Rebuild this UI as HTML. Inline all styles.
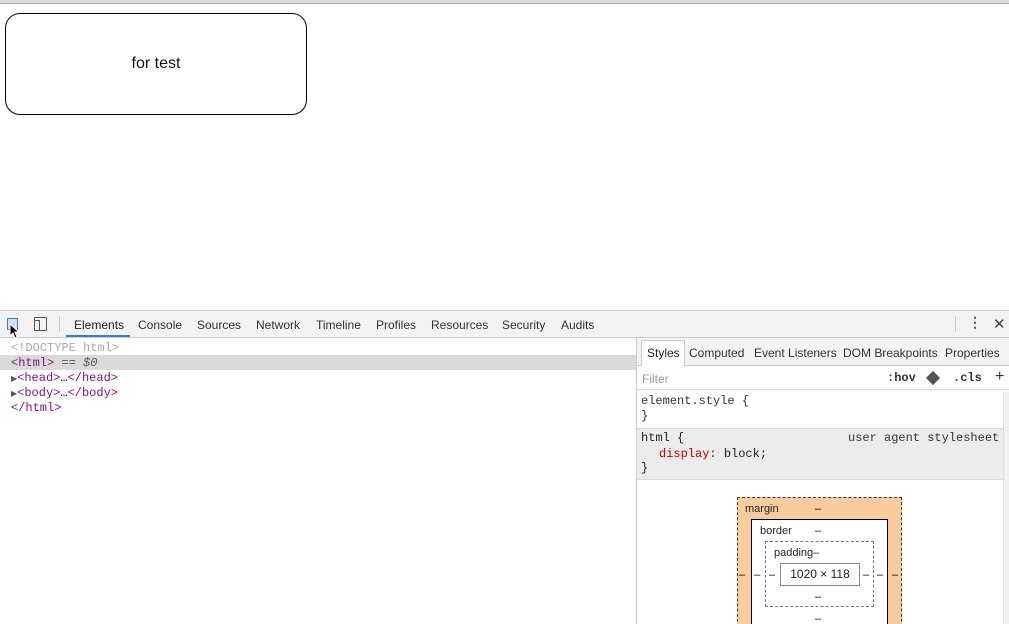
<!DOCTYPE html>
<html style="overflow:hidden"><head><style>
*{margin:0;padding:0;box-sizing:border-box}
html,body{width:1009px;height:624px;overflow:hidden}
body{background:#fff;font-family:"Liberation Sans",sans-serif;position:relative}
.a{position:absolute;white-space:nowrap}
.m{font-family:"Liberation Mono",monospace;font-size:12px;line-height:14px}
.t{font-size:12px;color:#333}
.tag{color:#881280}
</style></head><body>
<div class="a" style="left:0;top:0;width:1009px;height:4px;background:#dcdcdc;border-bottom:1px solid #aaa"></div>
<div class="a" style="left:5px;top:13px;width:302px;height:102px;border:1px solid #000;border-radius:15px;text-align:center;line-height:100px;font-size:16px;color:#111">for test</div>

<div class="a" style="left:0;top:310px;width:1009px;height:314px;background:#fff;border-top:1px solid #ccc"></div>
<div class="a" style="left:0;top:311px;width:1009px;height:27px;background:#f3f3f3;border-bottom:1px solid #ccc"></div>
<div class="a" style="left:7px;top:318px;width:11px;height:12px;border:1px solid #3879d9;background:#cfe0f7"></div>
<svg class="a" style="left:9px;top:323px" width="12" height="16" viewBox="0 0 12 16"><path d="M1 1 L1 13 L4 10 L6 15 L8 14 L6 9 L10 9 Z" fill="#000" stroke="#fff" stroke-width="1"/></svg>
<div class="a" style="left:34px;top:317px;width:13px;height:14px;border:1px solid #555;border-radius:1px"></div>
<div class="a" style="left:34px;top:320px;width:6px;height:11px;border:1px solid #555;background:#f3f3f3"></div>
<div class="a" style="left:59px;top:316px;width:1px;height:16px;background:#ccc"></div>
<div class="a t" style="left:74px;top:318px;color:#222">Elements</div>
<div class="a" style="left:66px;top:335px;width:64px;height:2px;background:#3879d9"></div>
<div class="a t" style="left:138px;top:318px">Console</div>
<div class="a t" style="left:197px;top:318px">Sources</div>
<div class="a t" style="left:256px;top:318px">Network</div>
<div class="a t" style="left:316px;top:318px">Timeline</div>
<div class="a t" style="left:376px;top:318px">Profiles</div>
<div class="a t" style="left:431px;top:318px">Resources</div>
<div class="a t" style="left:502px;top:318px">Security</div>
<div class="a t" style="left:561px;top:318px">Audits</div>
<div class="a" style="left:955px;top:316px;width:1px;height:16px;background:#ccc"></div>
<div class="a" style="left:968px;top:314px;font-size:14px;color:#555;font-weight:bold">&#8942;</div>
<div class="a" style="left:993px;top:315px;font-size:15px;color:#444">&#10005;</div>

<div class="a m" style="left:11px;top:341px;color:#aaa">&lt;!DOCTYPE html&gt;</div>
<div class="a" style="left:0;top:355px;width:636px;height:15px;background:#dadada"></div>
<div class="a m" style="left:11px;top:356px"><span class="tag">&lt;html&gt;</span> <span style="color:#555">== <i>$0</i></span></div>
<div class="a m" style="left:11px;top:371px"><span style="font-size:8px;color:#555">&#9654;</span><span class="tag">&lt;head&gt;</span>…<span class="tag">&lt;/head&gt;</span></div>
<div class="a m" style="left:11px;top:386px"><span style="font-size:8px;color:#555">&#9654;</span><span class="tag">&lt;body&gt;</span>…<span class="tag">&lt;/body&gt;</span></div>
<div class="a m tag" style="left:11px;top:401px">&lt;/html&gt;</div>

<div class="a" style="left:636px;top:338px;width:1px;height:286px;background:#ccc"></div>
<div class="a" style="left:637px;top:338px;width:372px;height:28px;background:#f3f3f3;border-bottom:1px solid #ccc"></div>
<div class="a" style="left:641px;top:340px;width:44px;height:27px;background:#fff;border:1px solid #ccc;border-bottom:none"></div>
<div class="a t" style="left:647px;top:346px;color:#222">Styles</div>
<div class="a t" style="left:689px;top:346px">Computed</div>
<div class="a t" style="left:754px;top:346px">Event Listeners</div>
<div class="a t" style="left:843px;top:346px">DOM Breakpoints</div>
<div class="a t" style="left:945px;top:346px">Properties</div>
<div class="a" style="left:637px;top:366px;width:372px;height:24px;background:#fff;border-bottom:1px solid #ddd"></div>
<div class="a t" style="left:642px;top:372px;color:#999">Filter</div>
<div class="a m" style="left:887px;top:371px;font-weight:bold;color:#333">:hov</div>
<div class="a" style="left:928px;top:373px;width:10px;height:10px;background:#555;transform:rotate(45deg)"></div>
<div class="a m" style="left:953px;top:371px;font-weight:bold;color:#333">.cls</div>
<div class="a" style="left:995px;top:368px;font-size:16px;color:#333">+</div>
<div class="a" style="left:1003px;top:392px;width:6px;height:232px;background:#f0f0f0;border-left:1px solid #ddd"></div>
<div class="a m" style="left:641px;top:394px;color:#333">element.style {</div>
<div class="a m" style="left:641px;top:409px;color:#333">}</div>
<div class="a" style="left:637px;top:428px;width:366px;height:52px;background:#ececec;border-top:1px solid #ddd;border-bottom:1px solid #ddd"></div>
<div class="a m" style="left:641px;top:431px;color:#222">html {</div>
<div class="a m" style="left:848px;top:431px;color:#333">user agent stylesheet</div>
<div class="a m" style="left:659px;top:447px;color:#222"><span style="color:#c80000">display</span>: block;</div>
<div class="a m" style="left:641px;top:461px;color:#222">}</div>

<div class="a" style="left:737px;top:497px;width:165px;height:140px;background:#f9cc9d;border:1px dashed #333"></div>
<div class="a" style="left:745px;top:503px;font-size:11px;color:#222">margin</div>
<div class="a" style="left:815px;top:503px;font-size:11px">–</div>
<div class="a" style="left:751px;top:519px;width:137px;height:120px;background:#fff;border:1px solid #000"></div>
<div class="a" style="left:760px;top:525px;font-size:11px;color:#222">border</div>
<div class="a" style="left:815px;top:525px;font-size:11px">–</div>
<div class="a" style="left:765px;top:541px;width:109px;height:66px;border:1px dashed #777"></div>
<div class="a" style="left:774px;top:547px;font-size:11px;color:#222">padding–</div>
<div class="a" style="left:780px;top:563px;width:80px;height:23px;border:1px solid #888;font-size:12px;text-align:center;line-height:21px;color:#222">1020 × 118</div>
<div class="a" style="left:739px;top:569px;font-size:11px">–</div>
<div class="a" style="left:754px;top:569px;font-size:11px">–</div>
<div class="a" style="left:769px;top:569px;font-size:11px">–</div>
<div class="a" style="left:863px;top:569px;font-size:11px">–</div>
<div class="a" style="left:877px;top:569px;font-size:11px">–</div>
<div class="a" style="left:892px;top:569px;font-size:11px">–</div>
<div class="a" style="left:815px;top:591px;font-size:11px">–</div>
<div class="a" style="left:815px;top:613px;font-size:11px">–</div>
</body></html>
